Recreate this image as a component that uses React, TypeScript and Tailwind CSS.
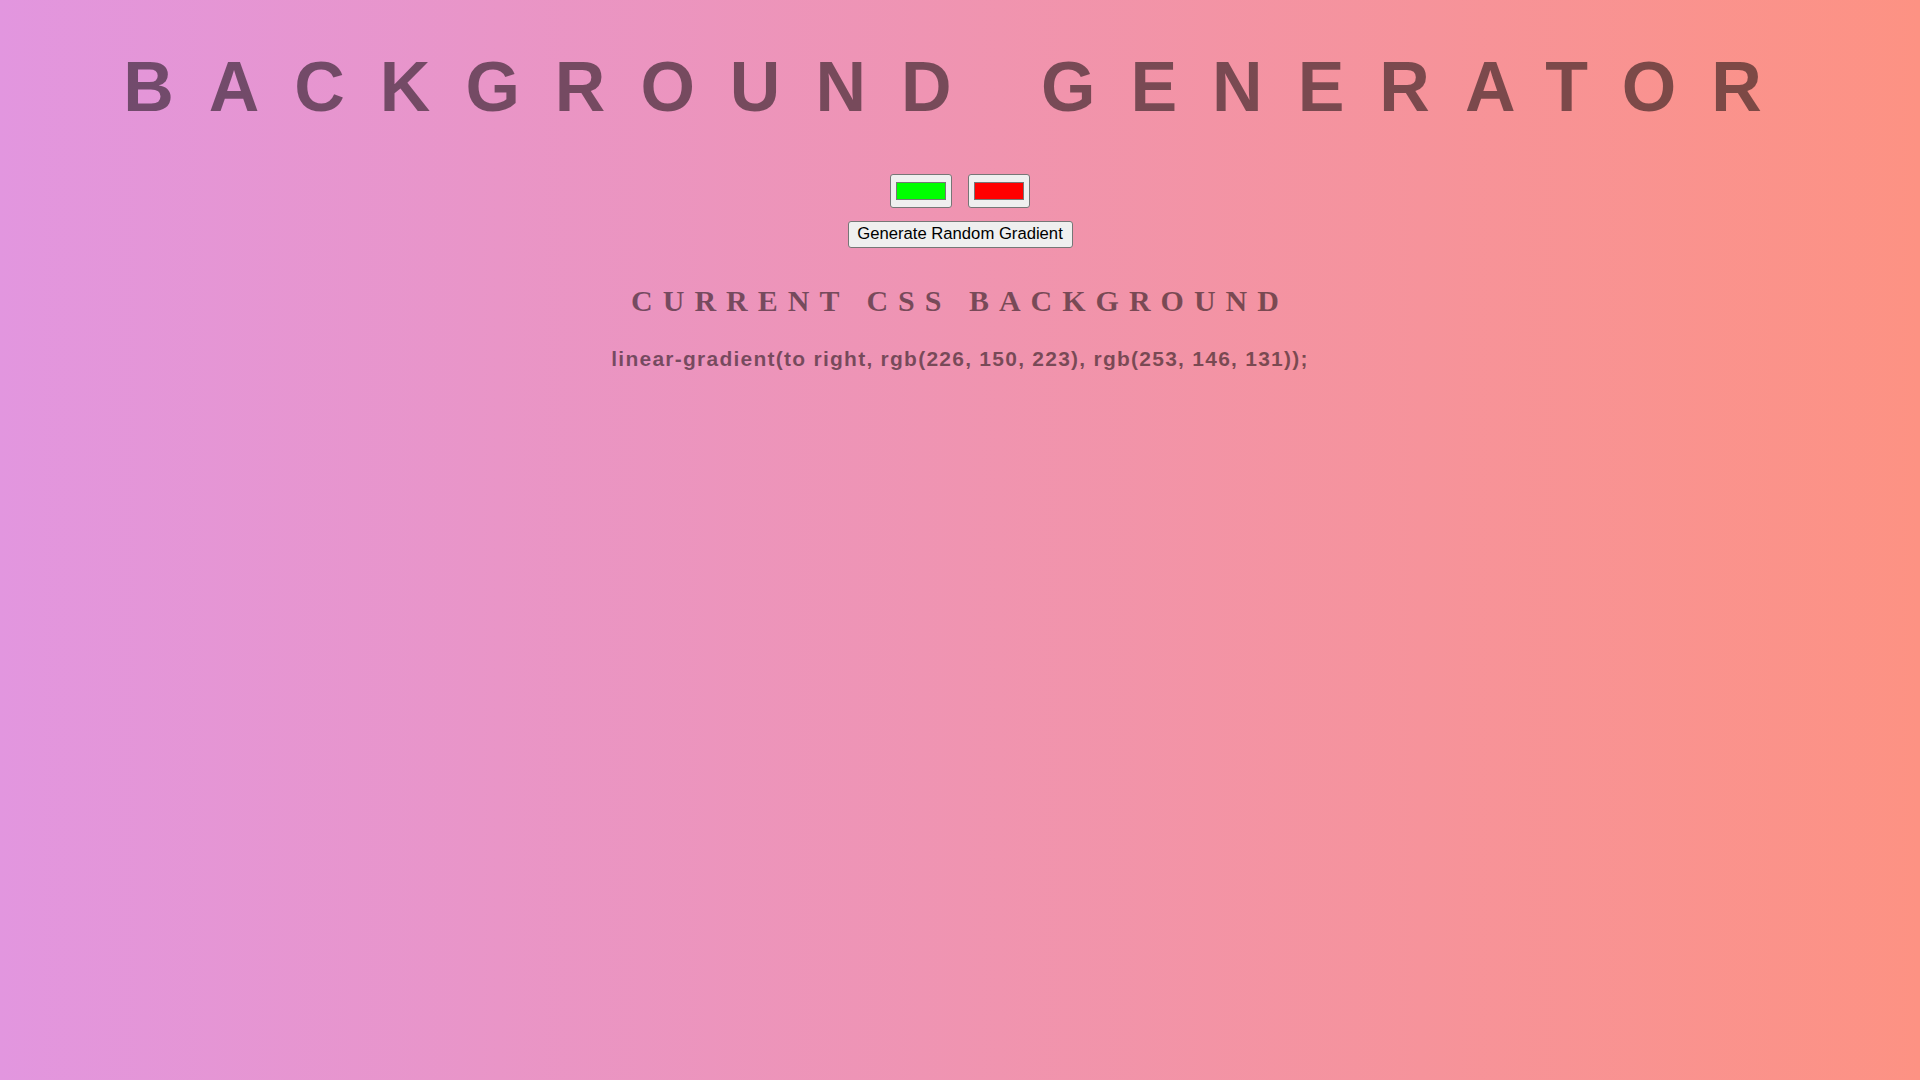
import React, { useState } from 'react';

// Background Generator: two colour pickers build a left-to-right gradient
const randomHex = () =>
  '#' +
  Array.from({ length: 3 }, () =>
    Math.floor(Math.random() * 256)
      .toString(16)
      .padStart(2, '0')
  ).join('');

const hexToRgb = (hex: string) => {
  const n = parseInt(hex.slice(1), 16);
  return `rgb(${(n >> 16) & 255}, ${(n >> 8) & 255}, ${n & 255})`;
};

const App: React.FC = () => {
  const [color1, setColor1] = useState('#e296df');
  const [color2, setColor2] = useState('#fd9283');
  const [touched, setTouched] = useState(false);

  const gradient = `linear-gradient(to right, ${hexToRgb(color1)}, ${hexToRgb(color2)})`;

  return (
    <div
      className="min-h-screen w-full pt-[47px] flex flex-col items-center text-center text-[rgba(0,0,0,0.5)] font-['Liberation_Serif',serif] bg-[linear-gradient(to_right,rgb(226,150,223),rgb(253,146,131))]"
      style={touched ? { backgroundImage: gradient } : undefined}
    >
      {/* Başlık */}
      <h1 className="w-full text-[70px] leading-[80px] font-bold uppercase tracking-[35px] font-['Liberation_Sans',Arial,sans-serif]">
        Background Generator
      </h1>

      {/* Renk seçiciler */}
      <div className="mt-[47px] flex items-center gap-[15.5px]">
        <input
          type="color"
          name="color1"
          defaultValue="#00ff00"
          onInput={(e) => {
            setColor1((e.target as HTMLInputElement).value);
            setTouched(true);
          }}
          className="w-[62px] h-[34px] p-[3px] border border-[#767676] rounded-[3px] bg-[#efefef] cursor-pointer"
        />
        <input
          type="color"
          name="color2"
          defaultValue="#ff0000"
          onInput={(e) => {
            setColor2((e.target as HTMLInputElement).value);
            setTouched(true);
          }}
          className="w-[62px] h-[34px] p-[3px] border border-[#767676] rounded-[3px] bg-[#efefef] cursor-pointer"
        />
      </div>

      <button
        type="button"
        onClick={() => {
          setColor1(randomHex());
          setColor2(randomHex());
          setTouched(true);
        }}
        className="mt-[12.5px] w-[225px] h-[27px] border border-[#767676] rounded-[3px] bg-[#efefef] text-black text-[16.67px] leading-none tracking-normal normal-case font-['Liberation_Sans',Arial,sans-serif] hover:bg-[#e5e5e5]"
      >
        Generate Random Gradient
      </button>

      <h2 className="mt-[36.5px] text-[30px] leading-[34.5px] font-bold uppercase tracking-[10px]">
        Current CSS Background
      </h2>

      <h3 className="mt-[28.5px] text-[21px] leading-[24px] font-bold tracking-[1.25px] font-['Liberation_Sans',Arial,sans-serif]">
        {gradient};
      </h3>
    </div>
  );
};

export default App;
